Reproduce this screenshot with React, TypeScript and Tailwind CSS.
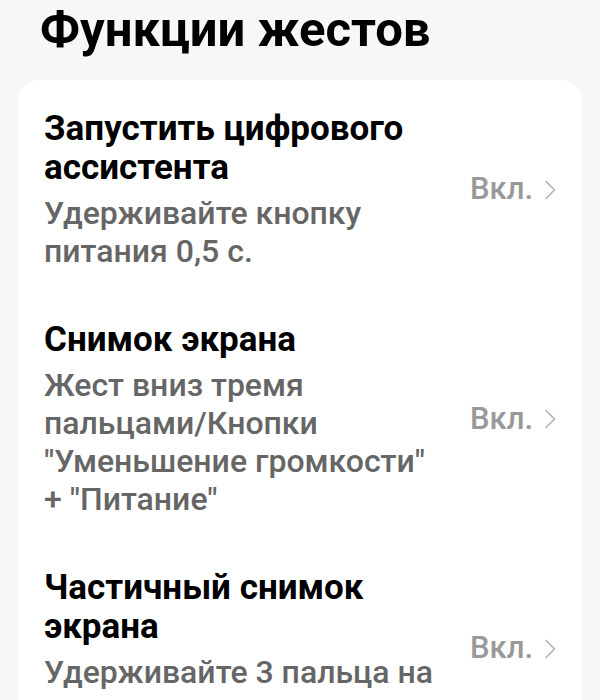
import React from "react";

const items = [
  {
    title: "Запустить цифрового ассистента",
    sub: "Удерживайте кнопку питания 0,5 с.",
  },
  {
    title: "Снимок экрана",
    sub: 'Жест вниз тремя пальцами/Кнопки "Уменьшение громкости" + "Питание"',
  },
  {
    title: "Частичный снимок экрана",
    sub: "Удерживайте 3 пальца на экране",
  },
];

function Chevron() {
  return (
    <svg width="12" height="20" viewBox="0 0 12 20" fill="none" className="shrink-0">
      <path d="M2 1.5 L10.5 10 L2 18.5" stroke="#b3b3b3" strokeWidth="1.6" strokeLinecap="round" strokeLinejoin="round" />
    </svg>
  );
}

export default function App() {
  return (
    <div
      className="w-[600px] h-[700px] overflow-hidden bg-[#f7f7f7]"
      style={{ fontFamily: "Roboto, 'Noto Sans', sans-serif" }}
    >
      <h1 className="pl-[40px] pt-[2px] h-[80px] text-[49px] leading-[56px] font-bold text-black">
        Функции жестов
      </h1>
      <div className="mx-[18px] bg-white rounded-[22px] pt-[4px]">
        {items.map((it, i) => (
          <div key={i} className="flex items-center pl-[26px] pr-[26px] py-[25px]">
            <div className="w-[400px] flex flex-col">
              <div className="text-[35px] leading-[39px] font-bold text-black">{it.title}</div>
              <div className="mt-[7px] text-[32px] leading-[38px] font-medium text-[#666666]">{it.sub}</div>
            </div>
            <div className="flex-1 flex items-center justify-end gap-[11px]">
              <span className="text-[31px] font-medium text-[#999999]">Вкл.</span>
              <Chevron />
            </div>
          </div>
        ))}
      </div>
    </div>
  );
}
